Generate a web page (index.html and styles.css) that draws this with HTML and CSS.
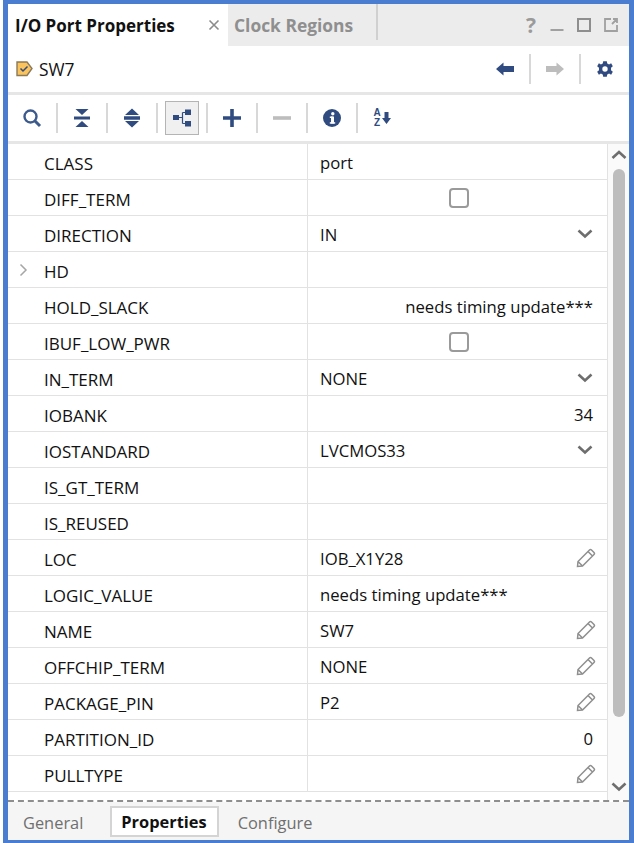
FILE: index.html
```html
<!DOCTYPE html>
<html lang="en">
<head>
    <meta charset="UTF-8">
    <title>I/O Port Properties</title>
    <link rel="stylesheet" href="styles.css">
</head>
<body>
    <svg class="defs" width="0" height="0">
        <symbol id="pencil" viewBox="0 0 20 20">
            <path d="M1.500 18.500 L2 13.500 L13.500 2 Q14.500 1 15.500 2 L18 4.500 Q19 5.500 18 6.500 L6.500 18 Z M2 13.500 L6.500 18 M12 3.500 L16.500 8" fill="none" stroke="#8f8f8f" stroke-width="1.500"/>
        </symbol>
        <symbol id="chev" viewBox="0 0 16 10">
            <path d="M1.500 1.500 L8 7.500 L14.500 1.500" fill="none" stroke="#6e6e6e" stroke-width="2.600"/>
        </symbol>
    </svg>
    <div class="window">
        <div class="tabbar">
            <div class="tab active">
                <span>I/O Port Properties</span>
                <svg class="tab-close" width="12" height="12" viewBox="0 0 12 12"><path d="M1.500 1.500 L10.500 10.500 M10.500 1.500 L1.500 10.500" stroke="#8c8c8c" stroke-width="1.600"/></svg>
            </div>
            <div class="tab other">Clock Regions</div>
            <i class="tab-sep"></i>
            <div class="win-buttons">
                <span class="help">?</span>
                <svg width="14" height="14" viewBox="0 0 14 14"><path d="M0.500 12 H13.500" stroke="#a0a0a0" stroke-width="2"/></svg>
                <svg width="14" height="14" viewBox="0 0 14 14"><rect x="1" y="1" width="12" height="12" fill="none" stroke="#8e8e8e" stroke-width="2"/></svg>
                <svg width="14" height="14" viewBox="0 0 14 14"><path d="M7 1 H1 V13 H13 V7 M8 6 L13 1 M9 1 H13 V5" fill="none" stroke="#a0a0a0" stroke-width="1.800"/></svg>
            </div>
        </div>

        <div class="titlebar">
            <svg class="port-icon" width="17" height="16" viewBox="0 0 17 16"><path d="M1 1 H11 L16 7.500 L11 14.500 H1 Z" fill="#fbc35c" stroke="#8a7a5a" stroke-width="1.400"/><path d="M4.500 7.500 L7 10 L11.500 5.500" fill="none" stroke="#2f4b80" stroke-width="1.500"/></svg>
            <span class="title">SW7</span>
            <div class="nav-buttons">
                <svg width="18" height="14" viewBox="0 0 18 14"><path d="M0 7 L7.500 0.500 V4 H18 V10 H7.500 V13.500 Z" fill="#2f4b80"/></svg>
                <i class="sep"></i>
                <svg width="18" height="14" viewBox="0 0 18 14"><path d="M18 7 L10.500 0.500 V4 H0 V10 H10.500 V13.500 Z" fill="#bdbdbd"/></svg>
                <i class="sep"></i>
                <svg width="18" height="18" viewBox="0 0 20 20"><path d="M8 1.500 H12 L12.500 4 L14.500 5 L16.800 3.700 L18.700 7 L16.700 8.500 V11.500 L18.700 13 L16.800 16.300 L14.500 15 L12.500 16 L12 18.500 H8 L7.500 16 L5.500 15 L3.200 16.300 L1.300 13 L3.300 11.500 V8.500 L1.300 7 L3.200 3.700 L5.500 5 L7.500 4 Z M10 7 A3 3 0 1 0 10 13 A3 3 0 1 0 10 7 Z" fill="#2f4b80" fill-rule="evenodd"/></svg>
            </div>
        </div>

        <div class="toolbar">
            <button class="tool"><svg width="20" height="20" viewBox="0 0 20 20"><circle cx="8.500" cy="8.500" r="6" fill="none" stroke="#3c5a8c" stroke-width="2.400"/><path d="M13 13 L18 18" stroke="#3c5a8c" stroke-width="3"/></svg></button>
            <i class="sep"></i>
            <button class="tool"><svg width="16" height="20" viewBox="0 0 16 20"><path d="M1.500 1 H14.500 L8 7 Z M1.500 19 H14.500 L8 13 Z" fill="#2f4b80"/><path d="M0 10 H16" stroke="#2f4b80" stroke-width="3"/></svg></button>
            <i class="sep"></i>
            <button class="tool"><svg width="16" height="20" viewBox="0 0 16 20"><path d="M1 7 L8 0.500 L15 7 Z M1 13 L8 19.500 L15 13 Z" fill="#2f4b80"/><path d="M0 10 H16" stroke="#2f4b80" stroke-width="3.500"/></svg></button>
            <i class="sep"></i>
            <button class="tool pressed"><svg width="18" height="18" viewBox="0 0 18 18"><path d="M6 8.500 H9.500 M9.500 3.500 V14.500 M9.500 3.500 H12 M9.500 14.500 H12" fill="none" stroke="#2f4b80" stroke-width="1.200"/><rect x="0" y="6" width="6" height="5" fill="#2f4b80"/><rect x="12" y="0.500" width="6" height="5.500" fill="#2f4b80"/><rect x="12" y="12" width="6" height="5.500" fill="#2f4b80"/></svg></button>
            <i class="sep"></i>
            <button class="tool"><svg width="18" height="18" viewBox="0 0 18 18"><path d="M0 9 H18 M9 0 V18" stroke="#2f4b80" stroke-width="3.600"/></svg></button>
            <i class="sep"></i>
            <button class="tool"><svg width="18" height="18" viewBox="0 0 18 18"><path d="M0 9 H18" stroke="#bdbdbd" stroke-width="3.600"/></svg></button>
            <i class="sep"></i>
            <button class="tool"><svg width="18" height="18" viewBox="0 0 18 18"><circle cx="9" cy="9" r="9" fill="#2f4b80"/><rect x="8" y="7.500" width="3" height="7" fill="#fff"/><rect x="6.800" y="7.500" width="3" height="1.500" fill="#fff"/><rect x="6.800" y="13.200" width="5.400" height="1.500" fill="#fff"/><circle cx="9.800" cy="4.800" r="1.700" fill="#fff"/></svg></button>
            <i class="sep"></i>
            <button class="tool sort">
                <span class="az">A<br>Z</span>
                <svg width="9" height="12" viewBox="0 0 9 12"><path d="M2.500 0 H6.500 V6 H9 L4.500 12 L0 6 H2.500 Z" fill="#2f4b80"/></svg>
            </button>
        </div>

        <div class="grid-area">
            <div class="rows">
                <div class="row"><div class="name">CLASS</div><div class="value">port</div></div>
                <div class="row"><div class="name">DIFF_TERM</div><div class="value center"><i class="check"></i></div></div>
                <div class="row"><div class="name">DIRECTION</div><div class="value spread">IN<svg class="chev"><use href="#chev"/></svg></div></div>
                <div class="row"><div class="name"><svg class="expand" width="9" height="14" viewBox="0 0 9 14"><path d="M1.500 1.500 L7 7 L1.500 12.500" fill="none" stroke="#a6a6a6" stroke-width="1.500"/></svg>HD</div><div class="value"></div></div>
                <div class="row"><div class="name">HOLD_SLACK</div><div class="value right">needs timing update***</div></div>
                <div class="row"><div class="name">IBUF_LOW_PWR</div><div class="value center"><i class="check"></i></div></div>
                <div class="row"><div class="name">IN_TERM</div><div class="value spread">NONE<svg class="chev"><use href="#chev"/></svg></div></div>
                <div class="row"><div class="name">IOBANK</div><div class="value right">34</div></div>
                <div class="row"><div class="name">IOSTANDARD</div><div class="value spread">LVCMOS33<svg class="chev"><use href="#chev"/></svg></div></div>
                <div class="row"><div class="name">IS_GT_TERM</div><div class="value"></div></div>
                <div class="row"><div class="name">IS_REUSED</div><div class="value"></div></div>
                <div class="row"><div class="name">LOC</div><div class="value spread">IOB_X1Y28<svg class="pencil"><use href="#pencil"/></svg></div></div>
                <div class="row"><div class="name">LOGIC_VALUE</div><div class="value">needs timing update***</div></div>
                <div class="row"><div class="name">NAME</div><div class="value spread">SW7<svg class="pencil"><use href="#pencil"/></svg></div></div>
                <div class="row"><div class="name">OFFCHIP_TERM</div><div class="value spread">NONE<svg class="pencil"><use href="#pencil"/></svg></div></div>
                <div class="row"><div class="name">PACKAGE_PIN</div><div class="value spread">P2<svg class="pencil"><use href="#pencil"/></svg></div></div>
                <div class="row"><div class="name">PARTITION_ID</div><div class="value right">0</div></div>
                <div class="row"><div class="name">PULLTYPE</div><div class="value spread"><span></span><svg class="pencil"><use href="#pencil"/></svg></div></div>
            </div>
            <div class="scrollbar">
                <svg width="16" height="10" viewBox="0 0 16 10"><path d="M1.500 8 L8 2 L14.500 8" fill="none" stroke="#6e6e6e" stroke-width="2.600"/></svg>
                <div class="thumb"></div>
                <svg width="16" height="10" viewBox="0 0 16 10"><path d="M1.500 1.500 L8 7.500 L14.500 1.500" fill="none" stroke="#6e6e6e" stroke-width="2.600"/></svg>
            </div>
        </div>

        <div class="bottom-tabs">
            <div class="btab">General</div>
            <div class="btab selected">Properties</div>
            <div class="btab">Configure</div>
        </div>
    </div>
</body>
</html>
```

FILE: styles.css
```css
body {
    margin: 0;
    background: white;
    font-family: "Open Sans", "Noto Sans", sans-serif;
    font-size: 16.7px;
    color: #111;
}
.defs {
    display: block;
    height: 0;
}
.window {
    width: 621px;
    height: 836px;
    margin-left: 3px;
    border: solid #4a7cd0;
    border-width: 4px 5px 3px 5px;
    display: flex;
    flex-direction: column;
    overflow: hidden;
}
.tabbar {
    height: 42px;
    flex: none;
    display: flex;
    background: #ececec;
}
.tab {
    display: flex;
    align-items: center;
}
.tab.active {
    width: 220px;
    box-sizing: border-box;
    padding-left: 7px;
    padding-right: 8px;
    justify-content: space-between;
    background: white;
    font-size: 17px;
    font-weight: 700;
    color: #111;
}
.tab.other {
    width: 148px;
    box-sizing: border-box;
    padding-left: 6px;
    font-size: 17.4px;
    font-weight: 700;
    color: #8f8f8f;
}
.tab-sep {
    display: block;
    width: 2px;
    height: 36px;
    background: #d0d0d0;
}
.win-buttons {
    margin-left: auto;
    padding-right: 11px;
    display: flex;
    align-items: center;
    gap: 13px;
}
.help {
    font-size: 21px;
    font-weight: 700;
    color: #9a9a9a;
    margin-right: 1px;
}
.titlebar {
    height: 46px;
    flex: none;
    display: flex;
    align-items: center;
    padding-left: 8px;
    border-bottom: 3px solid #e6e6e6;
}
.port-icon {
    margin-right: 6px;
}
.title {
    font-size: 17.4px;
}
.nav-buttons {
    margin-left: auto;
    padding-right: 15px;
    display: flex;
    align-items: center;
    gap: 15px;
}
.sep {
    display: block;
    width: 2px;
    height: 30px;
    background: #d8d8d8;
}
.toolbar {
    height: 46px;
    flex: none;
    display: flex;
    align-items: center;
    padding-left: 7px;
    gap: 7px;
    border-bottom: 3px solid #e6e6e6;
}
.tool {
    width: 34px;
    height: 34px;
    padding: 0;
    border: 1px solid transparent;
    background: none;
    display: flex;
    align-items: center;
    justify-content: center;
}
.tool.pressed {
    background: #f0f0f0;
    border-color: #b4b4b4;
}
.sort {
    gap: 1px;
}
.az {
    font-size: 10px;
    line-height: 10px;
    font-weight: 700;
    color: #2f4b80;
}
.grid-area {
    flex: 1;
    min-height: 0;
    display: flex;
    overflow: hidden;
    border-bottom: 2px dashed #8e8e8e;
}
.rows {
    width: 599px;
    flex: none;
    border-right: 1px solid #e2e2e2;
}
.row {
    height: 35px;
    display: flex;
    border-bottom: 1px solid #e2e2e2;
}
.name {
    width: 300px;
    box-sizing: border-box;
    padding: 3px 0 0 36px;
    font-size: 17px;
    position: relative;
    display: flex;
    align-items: center;
    border-right: 1px solid #e2e2e2;
}
.expand {
    position: absolute;
    left: 11px;
    top: 11px;
}
.value {
    flex: 1;
    display: flex;
    align-items: center;
    padding: 2px 14px 0 12px;
}
.value.center {
    justify-content: center;
    padding-right: 10px;
}
.value.right {
    justify-content: flex-end;
}
.value.spread {
    justify-content: space-between;
}
.check {
    display: block;
    width: 20px;
    height: 20px;
    margin-top: -2px;
    box-sizing: border-box;
    border: 2px solid #9a9a9a;
    border-radius: 4px;
}
.chev {
    width: 16px;
    height: 10px;
    margin-top: -2px;
}
.pencil {
    width: 20px;
    height: 20px;
    margin: -2px -3px 0 0;
}
.scrollbar {
    flex: 1;
    display: flex;
    flex-direction: column;
    align-items: center;
    background: #fafafa;
    padding-top: 6px;
}
.thumb {
    width: 12px;
    height: 548px;
    margin: 9px 0 65px;
    flex: none;
    border-radius: 6px;
    background: #bdbdbd;
}
.bottom-tabs {
    height: 38px;
    flex: none;
    display: flex;
    align-items: center;
    background: #f5f5f5;
    padding-left: 15px;
    font-size: 16.4px;
    color: #6f6f6f;
}
.btab {
    margin-right: 20px;
    padding-top: 2px;
}
.btab.selected {
    margin: 0 19px 0 7px;
    padding: 2px 10px 2px 9px;
    background: white;
    border: 2px solid #d4d4d4;
    font-weight: 700;
    color: #111;
}
```
